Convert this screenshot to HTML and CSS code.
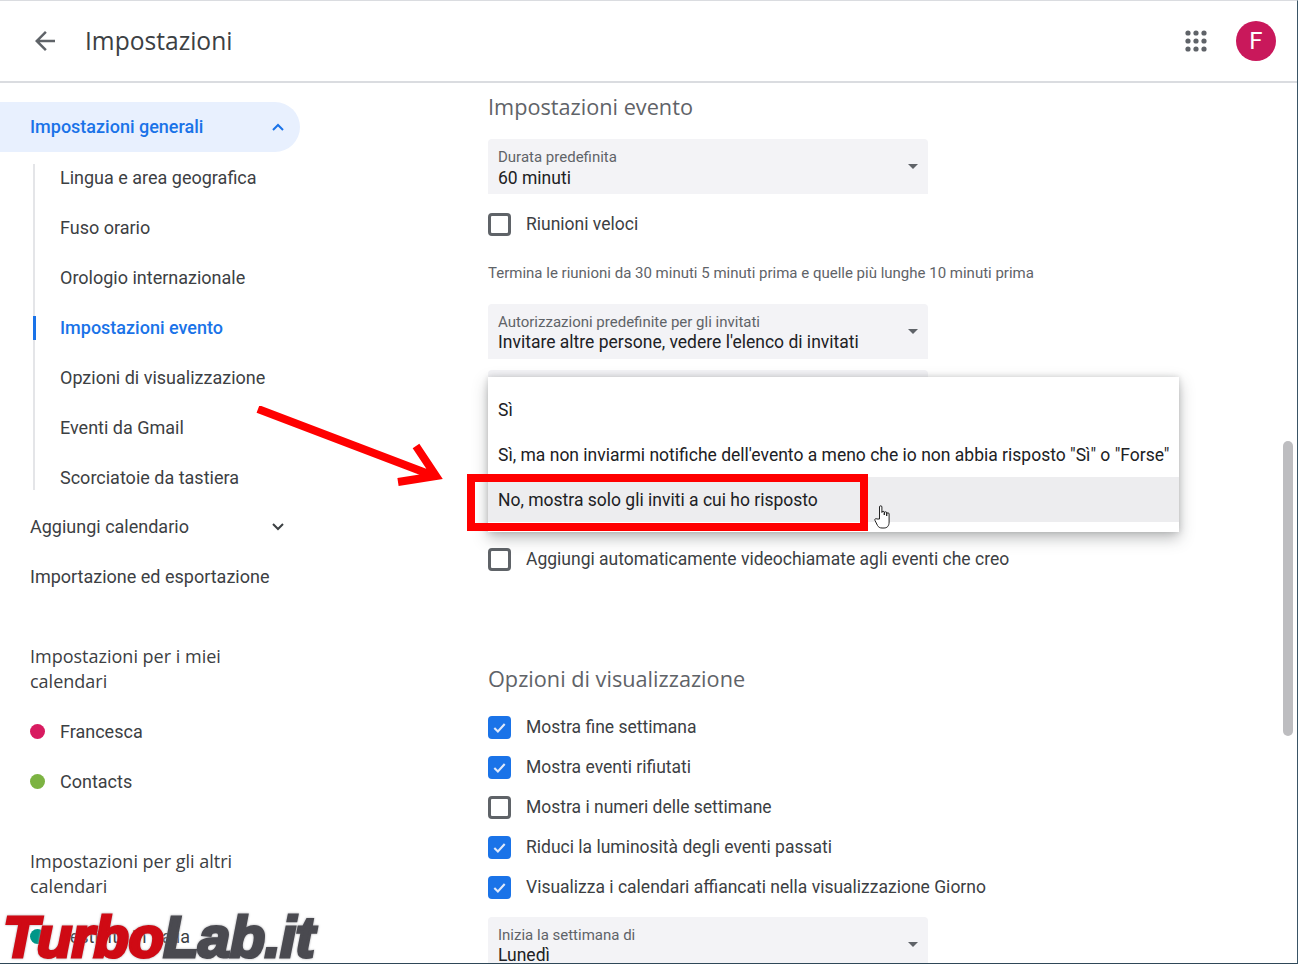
FILE: index.html
```html
<!DOCTYPE html>
<html lang="it">
<head>
  <meta charset="UTF-8" />
  <title>Impostazioni</title>
  <link rel="stylesheet" href="styles.css">
</head>
<body>
  <div class="app">
    <header class="topbar">
      <svg class="back" viewBox="0 0 24 24"><path d="M20 11H7.83l5.59-5.59L12 4l-8 8 8 8 1.41-1.41L7.83 13H20v-2z"/></svg>
      <div class="title">Impostazioni</div>
      <svg class="apps" viewBox="0 0 22 22">
        <circle cx="3" cy="3" r="2.6"/><circle cx="11" cy="3" r="2.6"/><circle cx="19" cy="3" r="2.6"/>
        <circle cx="3" cy="11" r="2.6"/><circle cx="11" cy="11" r="2.6"/><circle cx="19" cy="11" r="2.6"/>
        <circle cx="3" cy="19" r="2.6"/><circle cx="11" cy="19" r="2.6"/><circle cx="19" cy="19" r="2.6"/>
      </svg>
      <div class="avatar">F</div>
    </header>

    <div class="content">
      <nav class="sidebar">
        <div class="nav-item active">
          Impostazioni generali
          <svg class="chev" viewBox="0 0 12 8"><path d="M1 7l5-5 5 5"/></svg>
        </div>
        <div class="subnav">
          <div class="sub-item">Lingua e area geografica</div>
          <div class="sub-item">Fuso orario</div>
          <div class="sub-item">Orologio internazionale</div>
          <div class="sub-item current">Impostazioni evento</div>
          <div class="sub-item">Opzioni di visualizzazione</div>
          <div class="sub-item">Eventi da Gmail</div>
          <div class="sub-item">Scorciatoie da tastiera</div>
        </div>
        <div class="nav-item">
          Aggiungi calendario
          <svg class="chev" viewBox="0 0 12 8"><path d="M1 1l5 5 5-5"/></svg>
        </div>
        <div class="nav-item">Importazione ed esportazione</div>

        <div class="nav-title">Impostazioni per i miei calendari</div>
        <div class="cal-item"><span class="dot pink"></span>Francesca</div>
        <div class="cal-item"><span class="dot green"></span>Contacts</div>

        <div class="nav-title">Impostazioni per gli altri calendari</div>
        <div class="cal-item"><span class="dot teal"></span>Festività in Italia</div>
      </nav>

      <main class="main">
        <h2 class="section first">Impostazioni evento</h2>
        <div class="select s-first">
          <div class="select-label">Durata predefinita</div>
          <div class="select-value">60 minuti</div>
          <span class="caret"></span>
        </div>
        <div class="check-row r-first"><span class="box"></span>Riunioni veloci</div>
        <div class="hint">Termina le riunioni da 30 minuti 5 minuti prima e quelle più lunghe 10 minuti prima</div>
        <div class="select s-second">
          <div class="select-label">Autorizzazioni predefinite per gli invitati</div>
          <div class="select-value">Invitare altre persone, vedere l'elenco di invitati</div>
          <span class="caret"></span>
        </div>
        <div class="select s-third"></div>
        <div class="check-row r-video"><span class="box"></span>Aggiungi automaticamente videochiamate agli eventi che creo</div>

        <h2 class="section second">Opzioni di visualizzazione</h2>
        <div class="checks">
          <div class="check-row"><span class="box on"><svg viewBox="0 0 18 18"><path d="M3.5 9.5l3.8 3.8 7.2-8"/></svg></span>Mostra fine settimana</div>
          <div class="check-row"><span class="box on"><svg viewBox="0 0 18 18"><path d="M3.5 9.5l3.8 3.8 7.2-8"/></svg></span>Mostra eventi rifiutati</div>
          <div class="check-row"><span class="box"></span>Mostra i numeri delle settimane</div>
          <div class="check-row"><span class="box on"><svg viewBox="0 0 18 18"><path d="M3.5 9.5l3.8 3.8 7.2-8"/></svg></span>Riduci la luminosità degli eventi passati</div>
          <div class="check-row"><span class="box on"><svg viewBox="0 0 18 18"><path d="M3.5 9.5l3.8 3.8 7.2-8"/></svg></span>Visualizza i calendari affiancati nella visualizzazione Giorno</div>
        </div>
        <div class="select s-last">
          <div class="select-label">Inizia la settimana di</div>
          <div class="select-value">Lunedì</div>
          <span class="caret"></span>
        </div>
      </main>
    </div>

    <div class="scrollbar"></div>

    <div class="menu">
      <div class="option">Sì</div>
      <div class="option">Sì, ma non inviarmi notifiche dell'evento a meno che io non abbia risposto "Sì" o "Forse"</div>
      <div class="option hover">No, mostra solo gli inviti a cui ho risposto</div>
    </div>

    <div class="callout"></div>
    <svg class="arrow" viewBox="0 0 200 90">
      <path d="M2 3L178 70M160 40L180 70L142 76" />
    </svg>
    <svg class="cursor" viewBox="0 0 18 24">
      <path d="M5.5 14V2a1.2 1.2 0 0 1 2.4 0v5.5a1.2 1.2 0 0 1 2.4 0V10V8a1.2 1.2 0 0 1 2.4 0v3V9a1.2 1.2 0 0 1 2.4 0v8c0 4-2 6-5 6H8c-2.5 0-3.5-1-4.5-2.5L1 15.5c-.8-1.3.8-2.5 2-1.5z"/>
    </svg>

    <div class="watermark"><span class="wm-red">Turbo</span><span class="wm-dark">Lab.it</span></div>
  </div>
</body>
</html>
```

FILE: styles.css
```css
* {
  box-sizing: border-box;
}

body {
  margin: 0;
  font-family: Roboto, Arial, sans-serif;
  font-size: 17.5px;
  color: #3c4043;
  background-color: #fff;
}

.app {
  position: relative;
  width: 1298px;
  height: 964px;
  overflow: hidden;
  border-top: 1px solid #dadce0;
  border-right: 1px solid #3a5566;
  border-bottom: 1px solid #2f4858;
}

/* top bar */
.topbar {
  display: flex;
  align-items: center;
  height: 82px;
  border-bottom: 2px solid #dadce0;
  padding: 0 21px 0 30px;
}

.back {
  width: 30px;
  height: 30px;
  fill: #5f6368;
}

.title {
  margin-left: 25px;
  padding-bottom: 2px;
  font-family: "Open Sans", sans-serif;
  font-size: 24.6px;
  color: #3c4043;
  flex: 1;
}

.apps {
  width: 22px;
  height: 22px;
  fill: #5f6368;
}

.avatar {
  width: 40px;
  height: 40px;
  margin-left: 29px;
  border-radius: 50%;
  background-color: #c9185b;
  color: #fff;
  font-size: 24px;
  display: flex;
  align-items: center;
  justify-content: center;
}

/* sidebar */
.content {
  display: flex;
}

.sidebar {
  width: 300px;
  flex-shrink: 0;
  padding-top: 19px;
  font-size: 18px;
}

.nav-item {
  display: flex;
  align-items: center;
  justify-content: space-between;
  height: 50px;
  padding: 0 16px 2px 30px;
}

.nav-item.active {
  background-color: #e8f0fe;
  color: #1a73e8;
  font-weight: 500;
  border-radius: 0 25px 25px 0;
}

.chev {
  width: 12px;
  height: 8px;
  margin-top: 1px;
  fill: none;
  stroke: currentColor;
  stroke-width: 2;
}

.subnav {
  position: relative;
  height: 350px;
  padding-top: 1px;
  margin-left: 33px;
}

.subnav::before {
  content: "";
  position: absolute;
  left: 0;
  top: 12px;
  bottom: 12px;
  width: 2px;
  background-color: #e4e5e8;
}

.sub-item {
  display: flex;
  align-items: center;
  height: 50px;
  padding: 0 0 2px 27px;
  position: relative;
}

.sub-item.current {
  color: #1a73e8;
  font-weight: 500;
}

.sub-item.current::before {
  content: "";
  position: absolute;
  left: 0;
  top: 13px;
  width: 3px;
  height: 24px;
  background-color: #1a73e8;
}

.nav-title {
  width: 215px;
  margin: 42px 0 13px 30px;
  font-family: "Open Sans", sans-serif;
  font-size: 18px;
  font-weight: 500;
  line-height: 25px;
}

.cal-item {
  display: flex;
  align-items: center;
  height: 50px;
  padding: 0 0 2px 30px;
}

.dot {
  width: 15px;
  height: 15px;
  border-radius: 50%;
  margin-right: 15px;
}

.pink { background-color: #d81b60; }
.green { background-color: #7cb342; }
.teal { background-color: #009688; }

/* main column */
.main {
  flex: 1;
  padding-left: 188px;
}

.section {
  margin: 0;
  font-family: "Open Sans", sans-serif;
  font-size: 21.7px;
  font-weight: 400;
  line-height: 30px;
  color: #5f6368;
}

.section.first { margin-top: 9px; }
.section.second { margin-top: 85px; margin-bottom: 13px; }

.select {
  position: relative;
  width: 440px;
  height: 55px;
  padding: 10px 10px 0;
  background-color: #f3f3f6;
  border-radius: 4px 4px 0 0;
}

.s-first { margin-top: 17px; }
.s-second { margin-top: 21px; }
.s-third { margin-top: 11px; }
.s-last { margin-top: 10px; }

.s-first .select-value { margin-top: 1px; }

.select-label {
  font-size: 15px;
  line-height: 17px;
  color: #5f6368;
}

.select-value {
  line-height: 22px;
  color: #202124;
}

.caret {
  position: absolute;
  right: 10px;
  top: 25px;
  border-left: 5px solid transparent;
  border-right: 5px solid transparent;
  border-top: 5px solid #5f6368;
}

.check-row {
  display: flex;
  align-items: center;
  height: 40px;
}

.r-first { margin-top: 10px; }
.r-video { margin-top: 114px; }

.box {
  width: 23px;
  height: 23px;
  margin-right: 15px;
  border: 3px solid #5f6368;
  border-radius: 4px;
  flex-shrink: 0;
}

.box.on {
  background-color: #1a73e8;
  border: none;
  padding: 3px;
}

.box svg {
  display: block;
  width: 17px;
  height: 17px;
  fill: none;
  stroke: #dfe9fb;
  stroke-width: 2.2;
}

.hint {
  margin-top: 19px;
  font-size: 15px;
  line-height: 20px;
  color: #5f6368;
}

/* things lying over the page */
.scrollbar {
  position: absolute;
  left: 1283px;
  top: 440px;
  width: 10px;
  height: 295px;
  border-radius: 5px;
  background-color: #bdbdc0;
}

.menu {
  position: absolute;
  left: 488px;
  top: 376px;
  width: 691px;
  padding: 10px 0;
  background-color: #fff;
  box-shadow: 0 6px 14px rgba(60, 64, 67, 0.35), 0 0 6px rgba(60, 64, 67, 0.2);
}

.option {
  display: flex;
  align-items: center;
  height: 45px;
  padding-left: 10px;
  color: #202124;
  white-space: nowrap;
}

.option.hover {
  background-color: #ededef;
}

.callout {
  position: absolute;
  left: 467px;
  top: 473px;
  width: 401px;
  height: 57px;
  border: 8px solid #f00;
}

.arrow {
  position: absolute;
  left: 256px;
  top: 405px;
  width: 200px;
  height: 90px;
  fill: none;
  stroke: #f00;
  stroke-width: 8;
}

.cursor {
  position: absolute;
  left: 874px;
  top: 504px;
  width: 18px;
  height: 24px;
  fill: #fff;
  stroke: #222;
  stroke-width: 1;
}

.watermark {
  position: absolute;
  left: 3px;
  top: 909px;
  font-family: "Liberation Sans", Arial, sans-serif;
  font-size: 58px;
  font-weight: bold;
  font-style: italic;
  line-height: 54px;
  letter-spacing: -0.6px;
  white-space: nowrap;
  filter: drop-shadow(0 0 1px #a9a9ad);
}

.wm-red {
  color: #cf0a14;
  -webkit-text-stroke: 3px #cf0a14;
}

.wm-dark {
  color: #4a4a50;
  -webkit-text-stroke: 3px #4a4a50;
}
```
